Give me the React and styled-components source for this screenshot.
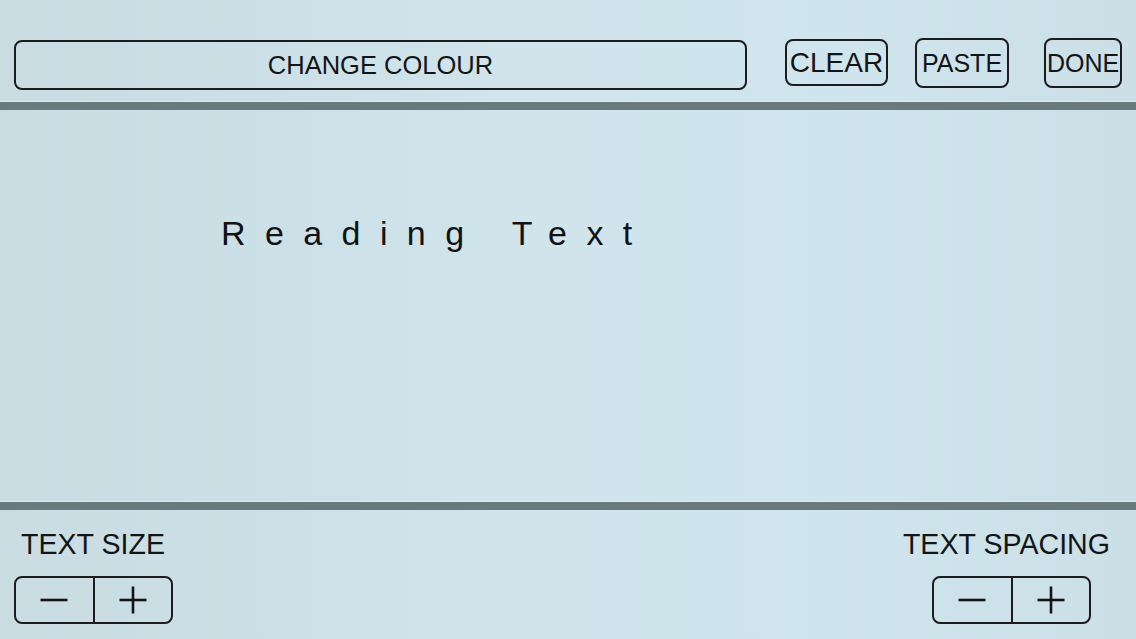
import React from "react";
import styled, { createGlobalStyle } from "styled-components";

const Global = createGlobalStyle`
  html, body { margin: 0; padding: 0; }
  body {
    background: #cde2e9;
    font-family: "Liberation Sans", Arial, sans-serif;
    color: #141414;
    overflow: hidden;
  }
`;

const Screen = styled.div`
  width: 1136px;
  height: 639px;
  display: flex;
  flex-direction: column;
  background: linear-gradient(90deg, #c8dce2 0%, #cfe4eb 45%, #d0e6ee 70%, #cadfe6 100%);
`;

const Header = styled.div`
  height: 101px;
  display: flex;
  align-items: flex-start;
  padding: 38px 14px 0;
  box-sizing: border-box;
`;

const Outline = styled.button`
  box-sizing: border-box;
  background: transparent;
  border: 2px solid #1c1c1c;
  border-radius: 8px;
  font-family: "Liberation Sans", Arial, sans-serif;
  color: #141414;
  padding: 0;
  display: flex;
  align-items: center;
  justify-content: center;
  cursor: pointer;
`;

const WideButton = styled(Outline)`
  flex: 0 0 733px;
  height: 50px;
  margin-top: 2px;
  font-size: 25.5px;
`;

const ActionButton = styled(Outline)`
  width: ${(p) => p.$w}px;
  height: ${(p) => p.$h}px;
  margin-left: ${(p) => p.$gap}px;
  margin-top: ${(p) => p.$top || 0}px;
  font-size: ${(p) => p.$fs}px;
`;

const Divider = styled.div`
  height: 8px;
  background: #687a7c;
  border-top: 1px solid #dcebef;
`;

const Content = styled.main`
  flex: 1;
  padding: 104px 0 0 221px;
  box-sizing: border-box;
`;

const Reading = styled.div`
  font-size: 34px;
  letter-spacing: 19.4px;
  line-height: 39px;
  color: #121212;
`;

const Footer = styled.div`
  height: 129px;
  display: flex;
  justify-content: space-between;
  padding: 18px 26px 0 14px;
  box-sizing: border-box;
`;

const Control = styled.div`
  display: flex;
  flex-direction: column;
  align-items: ${(p) => (p.$right ? "flex-end" : "flex-start")};
`;

const Label = styled.div`
  font-size: 28.6px;
  line-height: 32px;
  padding-left: ${(p) => (p.$right ? 0 : 7)}px;
  color: #141414;
`;

const Stepper = styled.div`
  margin-top: 16px;
  margin-right: ${(p) => (p.$right ? 19 : 0)}px;
  width: 159px;
  height: 48px;
  box-sizing: border-box;
  border: 2px solid #1c1c1c;
  border-radius: 8px;
  display: flex;
`;

const StepHalf = styled.button`
  flex: 1;
  background: transparent;
  border: none;
  border-left: ${(p) => (p.$divided ? "2px solid #1c1c1c" : "none")};
  padding: 0;
  display: flex;
  align-items: center;
  justify-content: center;
  cursor: pointer;
`;

const Minus = () => (
  <svg width="28" height="28" viewBox="0 0 28 28">
    <line x1="0.5" y1="14" x2="27.5" y2="14" stroke="#141414" strokeWidth="2.6" />
  </svg>
);

const Plus = () => (
  <svg width="28" height="28" viewBox="0 0 28 28">
    <line x1="0.5" y1="14" x2="27.5" y2="14" stroke="#141414" strokeWidth="2.6" />
    <line x1="14" y1="0.5" x2="14" y2="27.5" stroke="#141414" strokeWidth="2.6" />
  </svg>
);

const StepControl = ({ label, right }) => (
  <Control $right={right}>
    <Label $right={right}>{label}</Label>
    <Stepper $right={right}>
      <StepHalf aria-label="decrease">
        <Minus />
      </StepHalf>
      <StepHalf $divided aria-label="increase">
        <Plus />
      </StepHalf>
    </Stepper>
  </Control>
);

export default function App() {
  return (
    <>
      <Global />
      <Screen>
        <Header>
          <WideButton>CHANGE COLOUR</WideButton>
          <ActionButton $w={103} $h={47} $gap={38} $top={1} $fs={28}>
            CLEAR
          </ActionButton>
          <ActionButton $w={94} $h={50} $gap={27} $fs={25}>
            PASTE
          </ActionButton>
          <ActionButton $w={78} $h={50} $gap={35} $fs={25}>
            DONE
          </ActionButton>
        </Header>
        <Divider />
        <Content>
          <Reading>Reading Text</Reading>
        </Content>
        <Divider />
        <Footer>
          <StepControl label="TEXT SIZE" />
          <StepControl label="TEXT SPACING" right />
        </Footer>
      </Screen>
    </>
  );
}
